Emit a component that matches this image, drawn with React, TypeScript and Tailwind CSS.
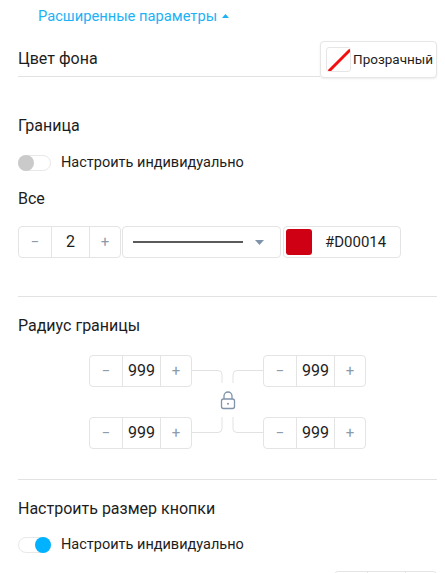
import React from 'react';

const Toggle: React.FC<{ on?: boolean }> = ({ on }) => (
  <div className="relative w-[33px] h-[16px] rounded-full border border-[#e8e8e8] bg-white">
    <div
      className={`absolute top-[-1px] w-[16px] h-[16px] rounded-full ${
        on ? 'right-[-1px] bg-[#00b2ff]' : 'left-[-1px] bg-[#cacaca]'
      }`}
    />
  </div>
);

const Stepper: React.FC<{ value: string }> = ({ value }) => (
  <div className="flex h-[32px] w-[103px] rounded-[4px] border border-[#e4e4e4] bg-white text-[#8c9bab]">
    <div className="w-[32px] flex items-center justify-center text-[15px]">−</div>
    <div className="w-[39px] flex items-center justify-center border-x border-[#e4e4e4] text-[16px] text-[#1d1d1d]">
      {value}
    </div>
    <div className="flex-1 flex items-center justify-center text-[15px]">+</div>
  </div>
);

const Connectors: React.FC = () => (
  <svg width="71" height="94" viewBox="0 0 71 94" fill="none">
    <path d="M0 15.5 H26 a4 4 0 0 1 4 4 V28" stroke="#e2e2e2" strokeWidth="1" />
    <path d="M71 15.5 H45 a4 4 0 0 0 -4 4 V28" stroke="#e2e2e2" strokeWidth="1" />
    <path d="M0 77.5 H26 a4 4 0 0 0 4 -4 V62" stroke="#e2e2e2" strokeWidth="1" />
    <path d="M71 77.5 H45 a4 4 0 0 1 -4 -4 V62" stroke="#e2e2e2" strokeWidth="1" />
    <g stroke="#7f93aa" strokeWidth="1.3">
      <path d="M32 44 V41 a4 4 0 0 1 8 0 V44" />
      <rect x="29.5" y="44" width="13" height="9.5" rx="2" />
    </g>
    <circle cx="36" cy="48.8" r="1" fill="#7f93aa" />
  </svg>
);

export default function App() {
  return (
    <div
      className="w-[445px] h-[573px] overflow-hidden bg-white pl-[18px] pr-[8px] text-[#1d1d1d]"
      style={{ fontFamily: 'Roboto, "Noto Sans", sans-serif' }}
    >
      <div className="h-[32px] pl-[20px] flex items-center gap-[5px] text-[14.7px] text-[#1cb2f5]">
        <span>Расширенные параметры</span>
        <svg width="7" height="4" viewBox="0 0 7 4">
          <path d="M0 4 L3.5 0 L7 4 Z" fill="#1cb2f5" />
        </svg>
      </div>

      <div className="mt-[9px] flex">
        <div className="flex-1 h-[36px] flex items-center border-b border-[#e2e2e2] text-[16px]">Цвет фона</div>
        <div className="w-[117px] h-[37px] rounded-[4px] border border-[#e6e6e6] bg-white shadow-[0_1px_2px_rgba(0,0,0,0.08)] flex items-center pl-[5px] gap-[2px]">
          <div className="w-[25px] h-[25px] rounded-[3px] border border-[#e6e6e6] overflow-hidden">
            <svg width="25" height="25" viewBox="0 0 25 25">
              <line x1="2.5" y1="22.5" x2="22.5" y2="2.5" stroke="#f50d0d" strokeWidth="3" strokeLinecap="round" />
            </svg>
          </div>
          <span className="text-[13.5px] text-[#1d1d1d]">Прозрачный</span>
        </div>
      </div>

      <div className="mt-[38px] h-[20px] flex items-center text-[16px]">Граница</div>

      <div className="mt-[17px] h-[20px] flex items-center gap-[10px]">
        <Toggle />
        <span className="text-[14.5px]">Настроить индивидуально</span>
      </div>

      <div className="mt-[16px] h-[20px] flex items-center text-[16px]">Все</div>

      <div className="mt-[17px] flex items-center gap-[1px]">
        <Stepper value="2" />
        <div className="w-[159px] h-[32px] rounded-[4px] border border-[#e4e4e4] flex items-center pl-[10px] pr-[16px] gap-[10px]">
          <div className="w-[110px] h-[1.5px] bg-[#5a5a5a]" />
          <svg width="9" height="5" viewBox="0 0 9 5" className="ml-auto">
            <path d="M0 0 L9 0 L4.5 5 Z" fill="#7f93aa" />
          </svg>
        </div>
        <div className="ml-[1px] w-[118px] h-[32px] rounded-[4px] border border-[#e4e4e4] flex items-center pl-[2px] gap-[13px]">
          <div className="w-[26px] h-[26px] rounded-[3px] bg-[#d00014]" />
          <span className="text-[15px]">#D00014</span>
        </div>
      </div>

      <div className="mt-[38px] border-t border-[#e2e2e2]" />

      <div className="mt-[19px] h-[20px] flex items-center text-[16px]">Радиус границы</div>

      <div className="mt-[19px] flex justify-center">
        <div className="flex flex-col gap-[30px]">
          <Stepper value="999" />
          <Stepper value="999" />
        </div>
        <Connectors />
        <div className="flex flex-col gap-[30px]">
          <Stepper value="999" />
          <Stepper value="999" />
        </div>
      </div>

      <div className="mt-[30px] border-t border-[#e2e2e2]" />

      <div className="mt-[19px] h-[20px] flex items-center text-[16px]">Настроить размер кнопки</div>

      <div className="mt-[16px] h-[20px] flex items-center gap-[10px]">
        <Toggle on />
        <span className="text-[14.5px]">Настроить индивидуально</span>
      </div>

      <div className="mt-[16px] flex justify-end">
        <div className="flex h-[32px] w-[103px] rounded-[4px] border border-[#e4e4e4] bg-white">
          <div className="w-[32px]" />
          <div className="w-[39px] border-x border-[#e4e4e4]" />
          <div className="flex-1" />
        </div>
      </div>
    </div>
  );
}
